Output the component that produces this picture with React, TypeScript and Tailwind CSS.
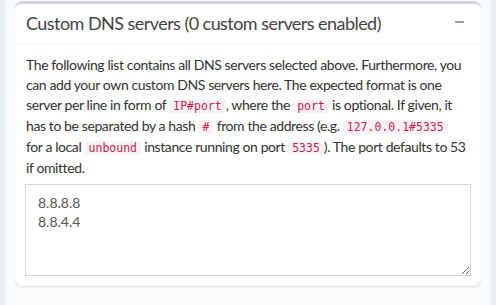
export default function App() {
    const code = "rounded-[3px] bg-[#f9f2f4] px-[4px] py-0 text-[#c7254e] text-[11.5px] tracking-normal font-['DejaVu_Sans_Mono',monospace]";
    return (
        <div className="w-[496px] h-[305px] bg-[#ecf0f5] px-[5px] font-['Lato',sans-serif]">
            <div className="h-full bg-[#f9fafb] px-[10px] pt-[1px]">
                <div className="rounded-[8px] border-t-[3px] border-[#d2d6de] bg-white shadow-[0_1px_2px_rgba(0,0,0,0.12)]">
                    <div className="flex items-center justify-between h-[40px] px-[11px] border-b border-[#f4f4f4]">
                        <h3 className="text-[18px] tracking-[-0.55px] text-[#444] font-normal">Custom DNS servers (0 custom servers enabled)</h3>
                        <span className="block w-[9px] h-[2px] bg-[#97a0b3] mr-[6px] mb-[3px]" />
                    </div>
                    <div className="px-[10px] pt-[11px] pb-[10px]">
                        <p className="text-[14px] leading-[20px] tracking-[-0.4px] text-[#333] pl-[1px]">
                            The following list contains all DNS servers selected above. Furthermore, you can add your own custom DNS servers here. The expected format is one server per line in form of <code className={code}>IP#port</code>, where the <code className={code}>port</code> is optional. If given, it has to be separated by a hash <code className={code}>#</code> from the address (e.g. <code className={code}>127.0.0.1#5335</code> <span className="whitespace-nowrap">for a local</span> <code className={code}>unbound</code> instance running on port <code className={code}>5335</code>). The port defaults to 53 if omitted.
                        </p>
                        <textarea
                            className="mt-[6px] block w-full h-[92px] border border-[#d2d6de] px-[12px] pt-[8px] text-[14px] leading-[19px] text-[#555] outline-none font-['Lato',sans-serif]"
                            defaultValue={"8.8.8.8\n8.8.4.4"}
                        />
                    </div>
                </div>
            </div>
        </div>
    );
}
